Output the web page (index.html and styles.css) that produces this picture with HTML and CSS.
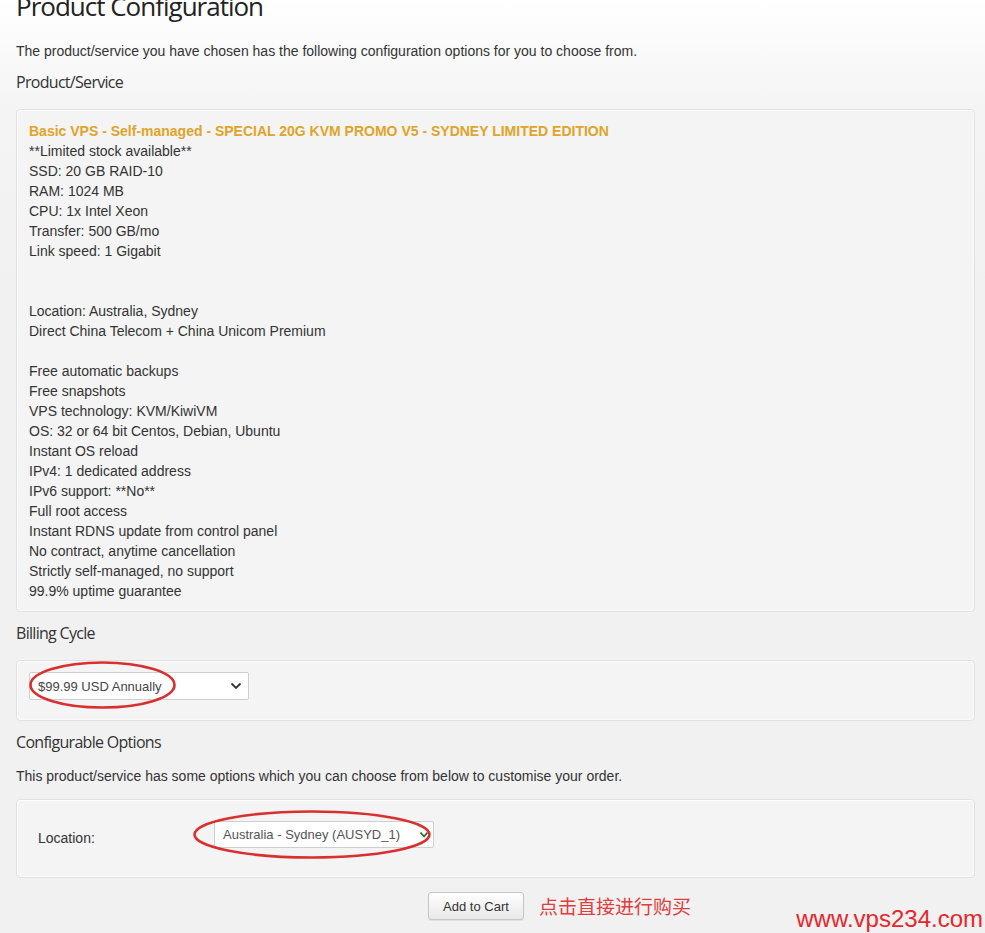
FILE: index.html
```html
<!DOCTYPE html>
<html lang="en">
<head>
<meta charset="utf-8">
<title>Product Configuration</title>
<link rel="stylesheet" href="styles.css">
</head>
<body>
<div class="page">
  <h1 class="title">Product Configuration</h1>
  <p class="intro">The product/service you have chosen has the following configuration options for you to choose from.</p>

  <h2 class="section">Product/Service</h2>
  <div class="well product">
    <div class="pname">Basic VPS - Self-managed - SPECIAL 20G KVM PROMO V5 - SYDNEY LIMITED EDITION</div>
    <div>**Limited stock available**</div>
    <div>SSD: 20 GB RAID-10</div>
    <div>RAM: 1024 MB</div>
    <div>CPU: 1x Intel Xeon</div>
    <div>Transfer: 500 GB/mo</div>
    <div>Link speed: 1 Gigabit</div>
    <div class="blank"></div>
    <div class="blank"></div>
    <div>Location: Australia, Sydney</div>
    <div>Direct China Telecom + China Unicom Premium</div>
    <div class="blank"></div>
    <div>Free automatic backups</div>
    <div>Free snapshots</div>
    <div>VPS technology: KVM/KiwiVM</div>
    <div>OS: 32 or 64 bit Centos, Debian, Ubuntu</div>
    <div>Instant OS reload</div>
    <div>IPv4: 1 dedicated address</div>
    <div>IPv6 support: **No**</div>
    <div>Full root access</div>
    <div>Instant RDNS update from control panel</div>
    <div>No contract, anytime cancellation</div>
    <div>Strictly self-managed, no support</div>
    <div>99.9% uptime guarantee</div>
  </div>

  <h2 class="section">Billing Cycle</h2>
  <div class="well billing">
    <div class="mark-wrap">
      <div class="select select-billing">
        <span>$99.99 USD Annually</span>
        <svg class="chev" width="12" height="8" viewBox="0 0 12 8"><path d="M1.5 1.5 L6 6 L10.5 1.5" fill="none" stroke="#333" stroke-width="1.8"/></svg>
      </div>
      <svg class="ellipse ellipse-billing" width="149" height="50" viewBox="0 0 149 50"><ellipse cx="74.5" cy="25" rx="72" ry="22.5" fill="none" stroke="#d8302e" stroke-width="2.6"/></svg>
    </div>
  </div>

  <h2 class="section">Configurable Options</h2>
  <p class="intro2">This product/service has some options which you can choose from below to customise your order.</p>
  <div class="well options">
    <div class="opt-row">
      <div class="opt-label">Location:</div>
      <div class="mark-wrap">
        <div class="select select-loc">
          <span>Australia - Sydney (AUSYD_1)</span>
          <svg class="chev" width="10" height="8" viewBox="0 0 10 8"><path d="M1.5 1.5 L5 5.5 L8.5 1.5" fill="none" stroke="#2a6a2a" stroke-width="1.8"/></svg>
        </div>
        <svg class="ellipse ellipse-loc" width="240" height="51" viewBox="0 0 240 51"><ellipse cx="120" cy="25.5" rx="117.5" ry="23" fill="none" stroke="#d8302e" stroke-width="2.6"/></svg>
      </div>
    </div>
  </div>

  <div class="actions">
    <button class="btn" type="button">Add to Cart</button>
    <span class="note">点击直接进行购买</span>
  </div>
</div>
<div class="watermark">www.vps234.com</div>
</body>
</html>
```

FILE: styles.css
```css
html, body {
  margin: 0;
  padding: 0;
}
body {
  background: linear-gradient(to bottom, #ffffff 0px, #f4f4f4 110px, #f1f1f1 300px, #f1f1f1 100%);
  background-color: #f1f1f1;
  font-family: "Liberation Sans", Arial, sans-serif;
  font-size: 14px;
  color: #333;
  position: relative;
  overflow: hidden;
  height: 933px;
}
.page {
  padding: 0 10px 0 16px;
}
.title {
  font-family: "Open Sans", "Noto Sans", sans-serif;
  font-weight: 400;
  font-size: 26px;
  letter-spacing: -1px;
  line-height: 30px;
  margin: -9px 0 0;
  color: #222;
}
.intro {
  margin: 20px 0 0;
  line-height: 20px;
}
.section {
  font-family: "Open Sans", "Noto Sans", sans-serif;
  font-weight: 400;
  font-size: 16px;
  letter-spacing: -0.7px;
  line-height: 24px;
  margin: 9px 0 0;
  color: #333;
}
.well {
  background: #f4f4f4;
  border: 1px solid #e1e1e1;
  border-radius: 4px;
  box-shadow: inset 1px 1px 0 #fff, inset -1px -1px 0 #fafafa;
  margin-top: 15px;
}
.product {
  padding: 11px 12px 10px;
  line-height: 20px;
}
.product .blank {
  height: 20px;
}
.pname {
  color: #e0a428;
  font-weight: bold;
}
.billing {
  padding: 11px 12px 20px;
}
.mark-wrap {
  position: relative;
  display: inline-block;
}
.select {
  background: #fff;
  border: 1px solid #cfcfcf;
  border-radius: 2px;
  box-sizing: border-box;
  display: flex;
  align-items: center;
  justify-content: space-between;
  color: #444;
}
.select-billing {
  width: 220px;
  height: 28px;
  padding: 0 6px 0 8px;
  font-size: 13px;
}
.select-loc {
  width: 220px;
  height: 27px;
  padding: 0 4px 0 8px;
  font-size: 13px;
  color: #555;
}
.chev {
  display: block;
}
.ellipse {
  position: absolute;
  pointer-events: none;
}
.ellipse-billing {
  left: -1px;
  top: -12px;
}
.ellipse-loc {
  left: -22px;
  top: -12px;
}
.intro2 {
  margin: 12px 0 0;
  line-height: 20px;
}
.options {
  margin-top: 13px;
  padding: 21px 12px 29px 21px;
}
.opt-row {
  display: flex;
  align-items: flex-start;
  height: 27px;
}
.opt-label {
  width: 176px;
  padding-top: 7px;
  line-height: 20px;
}
.actions {
  display: flex;
  align-items: center;
  margin-top: 14px;
  padding-left: 412px;
  gap: 15px;
}
.btn {
  font-family: "Liberation Sans", Arial, sans-serif;
  font-size: 13px;
  color: #333;
  width: 96px;
  height: 28px;
  border: 1px solid #c6c6c6;
  border-radius: 3px;
  background: linear-gradient(to bottom, #ffffff, #e8e8e8);
  box-shadow: 0 1px 1px rgba(0,0,0,0.08);
  padding: 0;
}
.note {
  font-family: "Noto Sans CJK SC", sans-serif;
  font-size: 19px;
  color: #e23b3b;
  line-height: 24px;
}
.watermark {
  position: absolute;
  right: 2px;
  top: 904px;
  font-family: "Liberation Sans", Arial, sans-serif;
  font-size: 24px;
  line-height: 30px;
  color: #e8262b;
}
```
